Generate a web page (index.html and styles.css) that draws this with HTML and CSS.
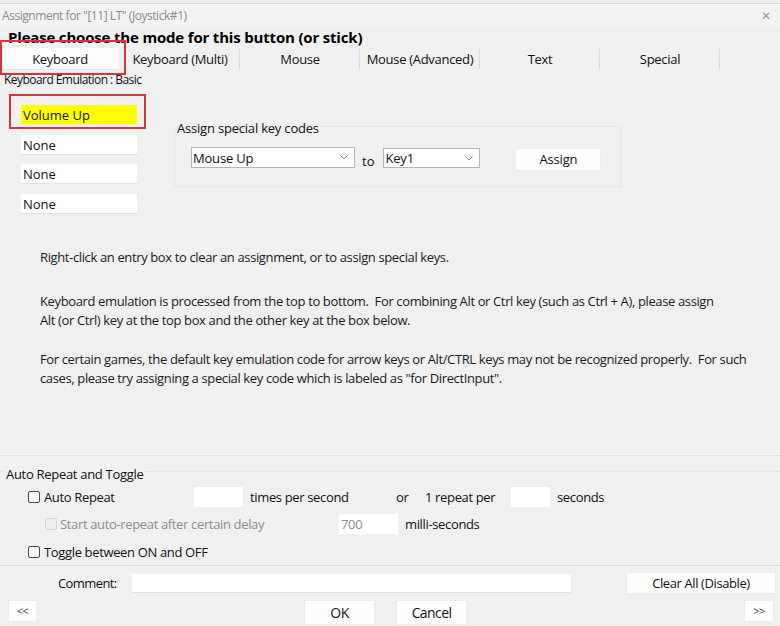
FILE: index.html
```html
<!DOCTYPE html>
<html>
<head>
<meta charset="utf-8">
<link rel="stylesheet" href="styles.css">
</head>
<body>
<div class="win">
  <div class="titlebar">
    <span class="title">Assignment for "[11] LT" (Joystick#1)</span>
    <span class="close">&#x2715;</span>
  </div>
  <div class="heading">Please choose the mode for this button (or stick)</div>
  <div class="tabs">
    <div class="tab selected">Keyboard</div>
    <div class="tab">Keyboard (Multi)</div>
    <div class="tab">Mouse</div>
    <div class="tab">Mouse (Advanced)</div>
    <div class="tab">Text</div>
    <div class="tab">Special</div>
  </div>
  <div class="mode-label">Keyboard Emulation : Basic</div>
  <div class="panel">
    <div class="top">
      <div class="keys">
        <div class="keyfield highlight">Volume Up</div>
        <div class="keyfield">None</div>
        <div class="keyfield">None</div>
        <div class="keyfield">None</div>
      </div>
      <div class="special">
        <div class="special-label">Assign special key codes</div>
        <div class="special-box">
          <div class="select sel-wide"><span>Mouse Up</span><svg class="chev" viewBox="0 0 8 5" width="8" height="5"><path d="M0.5 0.5 L4 4 L7.5 0.5" fill="none" stroke="#888" stroke-width="0.9"/></svg></div>
          <span class="to">to</span>
          <div class="select sel-narrow"><span>Key1</span><svg class="chev" viewBox="0 0 8 5" width="8" height="5"><path d="M0.5 0.5 L4 4 L7.5 0.5" fill="none" stroke="#888" stroke-width="0.9"/></svg></div>
          <div class="btn assign">Assign</div>
        </div>
      </div>
    </div>
    <div class="desc">
      <p class="p1">Right-click an entry box to clear an assignment, or to assign special keys.</p>
      <p class="p2">Keyboard emulation is processed from the top to bottom.&nbsp; For combining Alt or Ctrl key (such as Ctrl + A), please assign<br>Alt (or Ctrl) key at the top box and the other key at the box below.</p>
      <p class="p3">For certain games, the default key emulation code for arrow keys or Alt/CTRL keys may not be recognized properly.&nbsp; For such<br>cases, please try assigning a special key code which is labeled as "for DirectInput".</p>
    </div>
  </div>
  <div class="repeat">
    <div class="repeat-caption">Auto Repeat and Toggle</div>
    <div class="row row1">
      <span class="cb"></span>
      <span>Auto Repeat</span>
      <span class="cell"><span class="num w49"></span></span>
      <span>times per second</span>
      <span>or</span>
      <span>1 repeat per</span>
      <span class="cell"><span class="num w39"></span></span>
      <span>seconds</span>
    </div>
    <div class="row row2 disabled">
      <span class="cb dis"></span>
      <span>Start auto-repeat after certain delay</span>
      <span class="cell"><span class="num w59">700</span></span>
      <span class="dark">milli-seconds</span>
    </div>
    <div class="row row3">
      <span class="cb"></span>
      <span>Toggle between ON and OFF</span>
    </div>
  </div>
  <div class="comment-row">
    <span class="comment-label narrow">Comment:</span>
    <span class="comment-input"></span>
    <div class="btn clear">Clear All (Disable)</div>
  </div>
  <div class="bottom-row">
    <div class="btn nav narrow">&lt;&lt;</div>
    <div class="center-btns">
      <div class="btn ok narrow">OK</div>
      <div class="btn cancel narrow">Cancel</div>
    </div>
    <div class="btn nav last narrow">&gt;&gt;</div>
  </div>
</div>
</body>
</html>
```
FILE: styles.css
```css
* { box-sizing: border-box; }
html, body { margin: 0; padding: 0; }
body {
  width: 780px;
  height: 626px;
  overflow: hidden;
  background: #f0f0f0;
  font-family: "Open Sans", "Noto Sans", sans-serif;
  font-size: 13px;
  color: #111;
}
.win { width: 780px; height: 626px; }

.titlebar {
  height: 23px;
  border-top: 1px solid #d6d6d6;
  margin-top: 3px;
  background: #f3f3f3;
  display: flex;
  justify-content: space-between;
  align-items: center;
  padding: 0 9px 0 2px;
}
.title { color: #8c8c8c; font-size: 12px; letter-spacing: -0.45px; }
.close { color: #9a9a9a; font-size: 12px; }

.heading {
  font-weight: 700;
  font-size: 15px;
  letter-spacing: -0.18px;
  padding-left: 8px;
  height: 22px;
  line-height: 23px;
  color: #000;
}

.tabs {
  display: flex;
  height: 22px;
}
.tab {
  width: 120px;
  height: 22px;
  line-height: 22px;
  text-align: center;
  position: relative;
  letter-spacing: -0.3px;
  color: #111;
}
.tab:not(.selected)::before {
  content: "";
  position: absolute;
  right: 0;
  top: 1px;
  height: 20px;
  border-right: 1px solid #dadada;
}
.tab.selected {
  background: #fdfdfd;
  width: 116px;
  margin: 0 2px 0 2px;
  border-bottom: 1px solid #e4e4e4;
}
.tab.selected::after {
  content: "";
  position: absolute;
  left: -2px; right: -8px; top: -8px; bottom: -6px;
  border: 2px solid #d7343c;
}

.mode-label {
  font-size: 12px;
  padding-left: 4px;
  height: 14px;
  line-height: 14px;
  margin-top: 3px;
  letter-spacing: -0.55px;
}

.panel {
  height: 368px;
  border-bottom: 1px solid #fafafa;
  box-shadow: 0 1px 0 #e2e2e2;
}
.top { display: flex; align-items: flex-start; }
.keys {
  margin-left: 21px;
  margin-top: 18px;
  width: 116px;
  display: flex;
  flex-direction: column;
}
.keyfield {
  height: 20px;
  line-height: 20px;
  background: #fff;
  border-bottom: 1px solid #e0e0e0;
  padding-left: 2px;
  color: #111;
}
.keyfield:nth-child(2) { margin-bottom: 9px; }
.keyfield:nth-child(3) { margin-bottom: 10px; }
.keyfield.highlight {
  background: #ffff00;
  border-bottom: none;
  height: 19px;
  position: relative;
  margin-bottom: 11px;
}
.keyfield.highlight::after {
  content: "";
  position: absolute;
  left: -12px; right: -9px; top: -11px; bottom: -5px;
  border: 2px solid #d7343c;
}

.special { margin-left: 37px; margin-top: 33px; width: 447px; }
.special-label { padding-left: 3px; height: 16px; line-height: 16px; margin-bottom: -10px; position: relative; letter-spacing: -0.2px; }
.special-box {
  border: 1px solid #e6e6e6;
  height: 61px;
  display: flex;
  align-items: flex-start;
  padding: 20px 0 0 16px;
}
.select {
  height: 21px;
  background: #fff;
  border: 1px solid #b5b5b5;
  display: flex;
  align-items: center;
  justify-content: space-between;
  padding: 0 6px 0 1px;
  letter-spacing: -0.2px;
}
.sel-wide { width: 164px; }
.sel-narrow { width: 97px; margin-top: 1px; height: 20px; }
.chev { display: block; }
.to { margin: 4px 9px 0 7px; line-height: 20px; }
.btn {
  background: #fdfdfd;
  border: 1px solid #ececec;
  text-align: center;
}
.assign {
  width: 86px;
  height: 23px;
  line-height: 21px;
  margin-left: 35px;
  margin-top: 1px;
  letter-spacing: -0.2px;
}

.desc { padding-left: 40px; margin-top: 34px; color: #1a1a1a; }
.desc p {
  margin: 0;
  line-height: 19px;
  font-size: 13px;
  letter-spacing: -0.37px;
}
.desc .p2 { margin-top: 25px; }
.desc .p3 { margin-top: 20px; }

.repeat {
  margin-top: 16px;
  height: 95px;
  border-top: 1px solid #e4e4e4;
  border-bottom: 1px solid #dcdcdc;
  position: relative;
}
.repeat-caption {
  position: absolute;
  left: 4px;
  top: -6px;
  padding: 0 2px;
  background: #f0f0f0;
  line-height: 16px;
  letter-spacing: -0.3px;
}
.row {
  display: grid;
  align-items: center;
  height: 20px;
  letter-spacing: -0.35px;
}
.row1 {
  margin-top: 15px;
  margin-left: 28px;
  grid-template-columns: 16px 150px 56px 146px 29px 86px 46px auto;
}
.row2 {
  margin-top: 7px;
  margin-left: 45px;
  grid-template-columns: 15px 279px 66px auto;
}
.row3 {
  margin-top: 8px;
  margin-left: 28px;
  grid-template-columns: 16px auto;
}
.disabled { color: #8d8d8d; }
.dark { color: #111; }
.cb {
  width: 12px;
  height: 12px;
  border: 1px solid #4a4a4a;
  border-radius: 2px;
  background: #f7f7f7;
}
.cb.dis { border-color: #d4d4d4; background: #efefef; }
.cell { display: flex; }
.num {
  display: block;
  height: 20px;
  line-height: 20px;
  background: #fff;
  padding-left: 2px;
}
.w49 { width: 49px; }
.w39 { width: 39px; }
.w59 { width: 59px; color: #8d8d8d; }

.narrow { letter-spacing: -0.6px; }
.comment-row {
  display: flex;
  align-items: center;
  height: 30px;
  margin-top: 2px;
}
.comment-label { margin-left: 58px; width: 74px; }
.comment-input {
  width: 439px;
  height: 19px;
  background: #fff;
  border-bottom: 1px solid #e2e2e2;
}
.clear {
  margin-left: 55px;
  width: 150px;
  height: 22px;
  line-height: 20px;
  letter-spacing: -0.4px;
}
.bottom-row {
  display: flex;
  align-items: flex-start;
  padding: 0 6px 0 8px;
  margin-top: 2px;
}
.nav {
  width: 29px;
  height: 22px;
  line-height: 19px;
  font-size: 11px;
  color: #444;
}
.last { margin-left: auto; width: 30px; }
.center-btns { display: flex; gap: 21px; margin-left: 267px; }
.ok, .cancel {
  width: 71px;
  height: 25px;
  line-height: 23px;
  font-size: 14px;
}
```
